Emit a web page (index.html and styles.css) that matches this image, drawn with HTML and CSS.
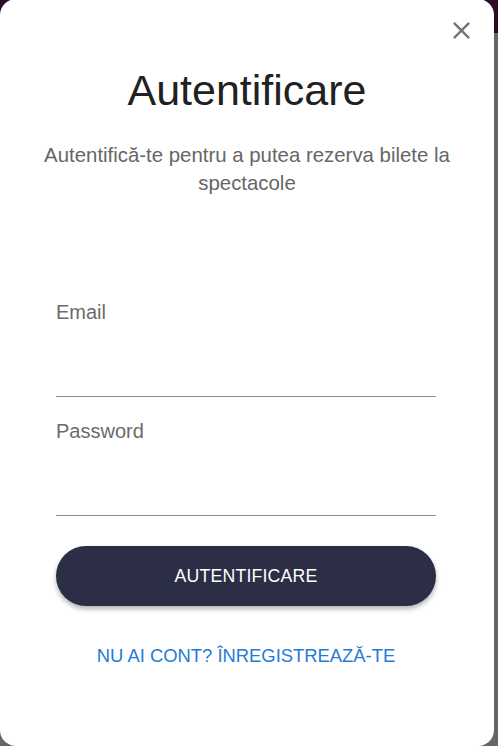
FILE: index.html
```html
<!DOCTYPE html>
<html lang="ro">
<head>
<meta charset="utf-8">
<title>Autentificare</title>
<link rel="stylesheet" href="styles.css">
</head>
<body>
<div class="page">
  <header class="topbar"></header>
  <div class="backdrop"></div>
</div>
<div class="dialog" role="dialog">
  <button class="close" aria-label="Închide">
    <svg viewBox="0 0 24 24" width="29" height="29"><path d="M19 6.41 17.59 5 12 10.59 6.41 5 5 6.41 10.59 12 5 17.59 6.41 19 12 13.41 17.59 19 19 17.59 13.41 12z" fill="#757575"/></svg>
  </button>
  <h1 class="title">Autentificare</h1>
  <p class="subtitle">Autentifică-te pentru a putea rezerva bilete la spectacole</p>
  <form class="form">
    <label class="field">
      <span class="label">Email</span>
      <input class="input" type="email">
    </label>
    <label class="field">
      <span class="label">Password</span>
      <input class="input" type="password">
    </label>
    <button type="button" class="submit">AUTENTIFICARE</button>
    <a class="register" href="#">NU AI CONT? ÎNREGISTREAZĂ-TE</a>
  </form>
</div>
</body>
</html>
```
FILE: styles.css
```css
* { box-sizing: border-box; }
html, body { margin: 0; padding: 0; height: 100%; }
body {
  font-family: "Liberation Sans", Arial, sans-serif;
  overflow: hidden;
}
.page { display: flex; flex-direction: column; height: 100%; }
.topbar { height: 33px; background: #2c0b27; flex: none; }
.backdrop { flex: 1; background: #666666; }

.dialog {
  position: fixed;
  top: -1px;
  left: 0;
  width: 494px;
  height: 747px;
  background: #ffffff;
  border-radius: 16px;
  padding: 66px 40px 0;
  display: flex;
  flex-direction: column;
  align-items: center;
}
.close {
  position: absolute;
  top: 17px;
  left: 447px;
  width: 29px;
  height: 29px;
  padding: 0;
  border: none;
  background: none;
  cursor: pointer;
  display: flex;
}
.title {
  margin: 0;
  font-size: 43px;
  font-weight: 400;
  line-height: 50px;
  color: #212121;
  text-align: center;
}
.subtitle {
  margin: 26px 0 0;
  font-size: 20.4px;
  line-height: 28px;
  color: #666666;
  text-align: center;
}
.form {
  align-self: stretch;
  margin-top: 105px;
  padding: 0 18px 0 16px;
  display: flex;
  flex-direction: column;
}
.field {
  display: flex;
  flex-direction: column;
  margin-bottom: 24px;
}
.field + .field { margin-bottom: 30px; }
.label {
  font-size: 20px;
  line-height: 20px;
  color: #6b6b6b;
}
.input {
  height: 75px;
  border: none;
  border-bottom: 1px solid #8c8c8c;
  outline: none;
  background: transparent;
  font: inherit;
  font-size: 18px;
  padding: 0;
}
.submit {
  height: 60px;
  border: none;
  border-radius: 30px;
  background: #2c2e45;
  color: #ffffff;
  font-family: "Liberation Sans", Arial, sans-serif;
  font-size: 17.7px;
  letter-spacing: 0.2px;
  box-shadow: 0 3px 5px rgba(0,0,0,0.3);
  cursor: pointer;
}
.register {
  margin-top: 40px;
  align-self: center;
  font-size: 18.4px;
  line-height: 20px;
  color: #1f7bd6;
  text-decoration: none;
}
```
